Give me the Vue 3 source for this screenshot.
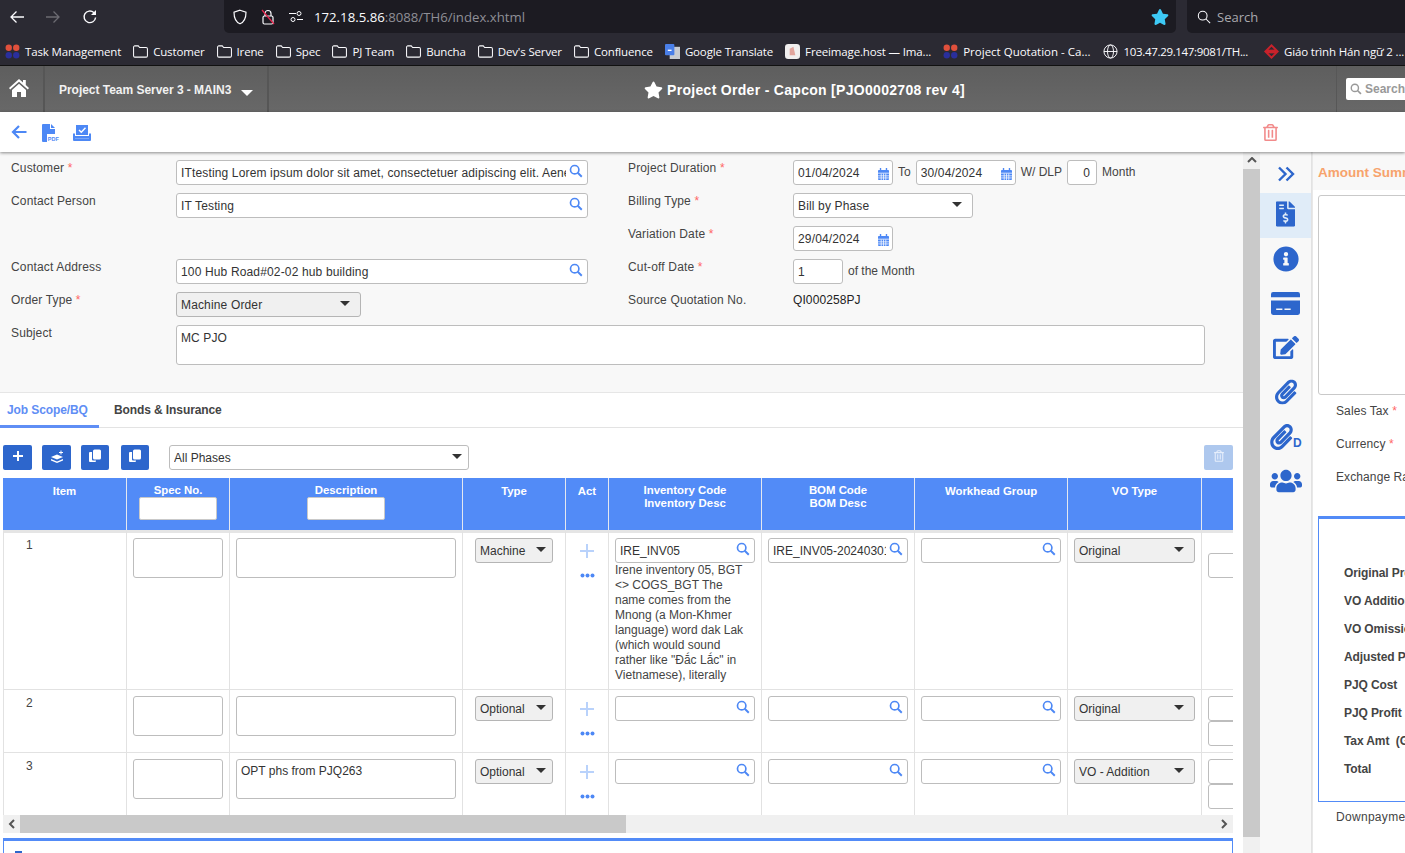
<script setup>
const bookmarks = [
  { icon: 'dots', text: 'Task Management' },
  { icon: 'folder', text: 'Customer' },
  { icon: 'folder', text: 'Irene' },
  { icon: 'folder', text: 'Spec' },
  { icon: 'folder', text: 'PJ Team' },
  { icon: 'folder', text: 'Buncha' },
  { icon: 'folder', text: "Dev's Server" },
  { icon: 'folder', text: 'Confluence' },
  { icon: 'gt', text: 'Google Translate' },
  { icon: 'free', text: 'Freeimage.host — Ima...' },
  { icon: 'dots', text: 'Project Quotation - Ca...' },
  { icon: 'globe', text: '103.47.29.147:9081/TH...' },
  { icon: 'sofl', text: 'Giáo trình Hán ngữ 2 ...' }
]
const rows = [
  { no: 1, cls: 'r1', desc: '', type: 'Machine', code: 'IRE_INV05', bom: 'IRE_INV05-20240301', vo: 'Original', extra: 1,
    text: 'Irene inventory 05, BGT <> COGS_BGT The name comes from the Mnong (a Mon-Khmer language) word dak Lak (which would sound rather like "Đắc Lắc" in Vietnamese), literally' },
  { no: 2, cls: 'r2', desc: '', type: 'Optional', code: '', bom: '', vo: 'Original', extra: 2, text: '' },
  { no: 3, cls: 'r2', desc: 'OPT phs from PJQ263', type: 'Optional', code: '', bom: '', vo: 'VO - Addition', extra: 2, text: '' }
]
const rail = [
  { id: 'i-invoice', vb: '0 0 384 512', cls: 'ri-doc', active: true },
  { id: 'i-info', vb: '0 0 512 512', cls: 'ri-info' },
  { id: 'i-card', vb: '0 0 28 22', cls: 'ri-card' },
  { id: 'i-edit', vb: '0 0 576 512', cls: 'ri-edit' },
  { id: 'i-clip', vb: '0 0 448 512', cls: 'ri-clip' },
  { id: 'i-clip', vb: '0 0 448 512', cls: 'ri-clipd', d: true },
  { id: 'i-users', vb: '0 0 640 512', cls: 'ri-users' }
]
const totals = ['Original Project', 'VO Addition', 'VO Omission', 'Adjusted Project', 'PJQ Cost', 'PJQ Profit', 'Tax Amt  (GST)', 'Total']
</script>

<template>
  <div class="page">
    <svg class="defs" width="0" height="0" aria-hidden="true">
      <defs>
        <symbol id="i-search" viewBox="0 0 16 16"><circle cx="6.5" cy="6.5" r="4.8" fill="none" stroke="currentColor" stroke-width="1.9"/><path d="M10 10l4.6 4.6" stroke="currentColor" stroke-width="2.2" fill="none"/></symbol>
        <symbol id="i-cal" viewBox="0 0 12 13"><path fill="currentColor" d="M2 0h1.5v2h5V0H10v2h1a1 1 0 0 1 1 1v2H0V3a1 1 0 0 1 1-1h1zM0 6h12v6a1 1 0 0 1-1 1H1a1 1 0 0 1-1-1z"/><path stroke="#fff" stroke-width=".8" d="M3.5 6v7M6 6v7M8.5 6v7M0 8.500h12M0 10.800h12"/></symbol>
        <symbol id="i-home" viewBox="0 0 20 18"><path fill="currentColor" d="M10 0L0 9l1.200 1.400L10 2.700l8.800 7.700L20 9l-3.200-2.900V1h-2.800v2.600zM3 11l7-6.200 7 6.200v7h-5v-5H8v5H3z"/></symbol>
        <symbol id="i-star" viewBox="0 0 576 512"><path fill="currentColor" d="M259.3 17.8L194 150.2 47.9 171.5c-26.2 3.8-36.7 36.1-17.7 54.6l105.7 103-25 145.500c-4.5 26.3 23.2 46 46.4 33.7L288 439.6l130.7 68.7c23.2 12.2 50.9-7.4 46.4-33.7l-25-145.5 105.7-103c19-18.5 8.5-50.8-17.7-54.6L382 150.2 316.7 17.8c-11.7-23.6-45.6-23.9-57.4 0z"/></symbol>
        <symbol id="i-trash" viewBox="0 0 448 512"><path fill="currentColor" d="M268 416h24a12 12 0 0 0 12-12V188a12 12 0 0 0-12-12h-24a12 12 0 0 0-12 12v216a12 12 0 0 0 12 12zM432 80h-82.41l-34-56.7A48 48 0 0 0 274.41 0H173.59a48 48 0 0 0-41.16 23.3L98.41 80H16A16 16 0 0 0 0 96v16a16 16 0 0 0 16 16h16v336a48 48 0 0 0 48 48h288a48 48 0 0 0 48-48V128h16a16 16 0 0 0 16-16V96a16 16 0 0 0-16-16zM171.84 50.91A6 6 0 0 1 177 48h94a6 6 0 0 1 5.15 2.91L293.61 80H154.39zM368 464H80V128h288zm-212-48h24a12 12 0 0 0 12-12V188a12 12 0 0 0-12-12h-24a12 12 0 0 0-12 12v216a12 12 0 0 0 12 12z"/></symbol>
        <symbol id="i-info" viewBox="0 0 512 512"><path fill="currentColor" d="M256 8C119.043 8 8 119.083 8 256c0 136.997 111.043 248 248 248s248-111.003 248-248C504 119.083 392.957 8 256 8zm0 110c23.196 0 42 18.804 42 42s-18.804 42-42 42-42-18.804-42-42 18.804-42 42-42zm56 254c0 6.627-5.373 12-12 12h-88c-6.627 0-12-5.373-12-12v-24c0-6.627 5.373-12 12-12h12v-64h-12c-6.627 0-12-5.373-12-12v-24c0-6.627 5.373-12 12-12h64c6.627 0 12 5.373 12 12v100h12c6.627 0 12 5.373 12 12v24z"/></symbol>
        <symbol id="i-card" viewBox="0 0 28 22"><path fill="currentColor" d="M2 0h24a2 2 0 0 1 2 2v3H0V2a2 2 0 0 1 2-2zM0 8h28v12a2 2 0 0 1-2 2H2a2 2 0 0 1-2-2z"/><path stroke="#f8f8f8" stroke-width="1.500" d="M5 16.500h6M13 16.500h6"/></symbol>
        <symbol id="i-edit" viewBox="0 0 576 512"><path fill="currentColor" d="M402.6 83.2l90.2 90.2c3.8 3.8 3.8 10 0 13.8L274.4 405.6l-92.8 10.3c-12.4 1.4-22.9-9.1-21.5-21.5l10.3-92.8L388.8 83.2c3.8-3.8 10-3.8 13.8 0zm162-22.9l-48.8-48.8c-15.2-15.2-39.9-15.2-55.2 0l-35.4 35.4c-3.8 3.8-3.8 10 0 13.8l90.2 90.2c3.8 3.8 10 3.8 13.8 0l35.4-35.4c15.2-15.3 15.2-40 0-55.2zM384 346.2V448H64V128h229.8c3.2 0 6.2-1.3 8.5-3.5l40-40c7.6-7.6 2.2-20.5-8.5-20.5H48C21.5 64 0 85.5 0 112v352c0 26.5 21.5 48 48 48h352c26.5 0 48-21.5 48-48V306.2c0-10.7-12.9-16-20.5-8.5l-40 40c-2.2 2.3-3.5 5.3-3.5 8.5z"/></symbol>
        <symbol id="i-clip" viewBox="0 0 448 512"><path fill="currentColor" d="M43.246 466.142c-58.43-60.289-57.341-157.511 1.386-217.581L254.392 34c44.316-45.332 116.351-45.336 160.671 0 43.89 44.894 43.943 117.329 0 162.276L232.214 383.128c-29.855 30.537-78.633 30.111-107.982-.998-28.275-29.97-27.368-77.473 1.452-106.953l143.743-146.835c6.182-6.314 16.312-6.422 22.626-.241l22.861 22.379c6.315 6.182 6.422 16.312.241 22.626L171.427 319.927c-4.932 5.045-5.236 13.428-.648 18.292 4.372 4.634 11.245 4.711 15.688.165l182.849-186.851c19.613-20.062 19.613-52.725-.011-72.798-19.189-19.627-49.957-19.637-69.154 0L90.39 293.295c-34.763 35.56-35.299 93.12-1.191 128.313 34.01 35.093 88.985 35.137 123.058.286l172.06-175.999c6.177-6.319 16.307-6.433 22.626-.256l22.877 22.364c6.319 6.177 6.434 16.307.256 22.626l-172.06 175.998c-59.576 60.938-155.943 60.216-214.77-.485z"/></symbol>
        <symbol id="i-users" viewBox="0 0 640 512"><path fill="currentColor" d="M96 224c35.3 0 64-28.7 64-64s-28.7-64-64-64-64 28.7-64 64 28.7 64 64 64zm448 0c35.3 0 64-28.7 64-64s-28.7-64-64-64-64 28.7-64 64 28.7 64 64 64zm32 32h-64c-17.6 0-33.5 7.1-45.1 18.6 40.3 22.1 68.9 62 75.1 109.4h66c17.7 0 32-14.3 32-32v-32c0-35.3-28.7-64-64-64zm-256 0c61.9 0 112-50.1 112-112S381.9 32 320 32 208 82.1 208 144s50.1 112 112 112zm76.8 32h-8.3c-20.8 10-43.9 16-68.5 16s-47.6-6-68.5-16h-8.3C179.6 288 128 339.6 128 403.2V432c0 26.5 21.500 48 48 48h288c26.5 0 48-21.5 48-48v-28.8c0-63.6-51.6-115.2-115.2-115.2zm-223.7-13.4C161.5 263.1 145.6 256 128 256H64c-35.3 0-64 28.7-64 64v32c0 17.7 14.3 32 32 32h65.9c6.3-47.4 34.9-87.3 75.2-109.4z"/></symbol>
        <symbol id="i-invoice" viewBox="0 0 384 512"><path fill="currentColor" d="M377 105L279.1 7c-4.5-4.5-10.6-7-17-7H256v128h128v-6.1c0-6.3-2.5-12.4-7-16.9zm-153 31V0H24C10.7 0 0 10.7 0 24v464c0 13.3 10.7 24 24 24h336c13.3 0 24-10.7 24-24V160H248c-13.2 0-24-10.800-24-24zM64 72c0-4.42 3.58-8 8-8h80c4.42 0 8 3.58 8 8v16c0 4.42-3.58 8-8 8H72c-4.42 0-8-3.58-8-8V72zm0 80v-16c0-4.42 3.58-8 8-8h80c4.42 0 8 3.58 8 8v16c0 4.42-3.58 8-8 8H72c-4.42 0-8-3.58-8-8zm144 263.88V440c0 4.42-3.58 8-8 8h-16c-4.42 0-8-3.58-8-8v-24.29c-11.29-.58-22.27-4.52-31.37-11.35-3.9-2.93-4.1-8.77-.57-12.14l11.75-11.21c2.77-2.64 6.89-2.76 10.13-.73 3.87 2.42 8.26 3.72 12.82 3.72h28.11c6.5 0 11.8-5.92 11.8-13.19 0-5.95-3.61-11.19-8.77-12.73l-45-13.5c-18.59-5.58-31.58-23.42-31.58-43.39 0-24.52 19.05-44.44 42.67-45.07V232c0-4.42 3.58-8 8-8h16c4.42 0 8 3.58 8 8v24.29c11.29.58 22.27 4.51 31.37 11.35 3.9 2.93 4.1 8.77.57 12.14l-11.75 11.21c-2.77 2.64-6.89 2.76-10.13.73-3.87-2.43-8.26-3.72-12.82-3.72h-28.11c-6.5 0-11.8 5.92-11.8 13.19 0 5.95 3.61 11.19 8.77 12.73l45 13.5c18.59 5.58 31.58 23.42 31.58 43.39 0 24.53-19.05 44.44-42.67 45.07z"/></symbol>
        <symbol id="i-folder" viewBox="0 0 16 14"><path fill="none" stroke="currentColor" stroke-width="1.100" d="M2 1h3.600l1.500 1.800H14a1.400 1.400 0 0 1 1.400 1.400V11.500A1.500 1.500 0 0 1 14 13H2A1.500 1.500 0 0 1 .6 11.500V2.400A1.400 1.400 0 0 1 2 1z"/></symbol>
        <symbol id="i-dots" viewBox="0 0 16 16"><circle cx="4" cy="4" r="3.400" fill="#e0503c"/><circle cx="12" cy="4" r="3.400" fill="#e0503c"/><circle cx="4" cy="12" r="3.400" fill="#2a2f9c"/><circle cx="12" cy="12" r="3.400" fill="#2a2f9c"/></symbol>
        <symbol id="i-copy" viewBox="0 0 14 14"><rect x="5" y=".5" width="8" height="10" rx="1.500" fill="#fff"/><path d="M4 3H2a1 1 0 0 0-1 1v8a1 1 0 0 0 1 1h5a1 1 0 0 0 1-1v-.500H5a1 1 0 0 1-1-1z" fill="#fff"/></symbol>
      </defs>
    </svg>

    <header class="browser">
      <div class="nav">
        <svg class="nb b1" viewBox="0 0 16 16"><path d="M15 8H2M7.500 2.500L2 8l5.500 5.500" fill="none" stroke="#fbfbfe" stroke-width="1.300"/></svg>
        <svg class="nb b2" viewBox="0 0 16 16"><path d="M1 8h13M8.500 2.500L14 8l-5.500 5.500" fill="none" stroke="#6c6b72" stroke-width="1.300"/></svg>
        <svg class="nb b3" viewBox="0 0 16 16"><path d="M13.600 8.500A5.800 5.800 0 1 1 11.800 3.600L13.500 5" fill="none" stroke="#fbfbfe" stroke-width="1.400"/><path d="M14 1v5H9z" fill="#fbfbfe"/></svg>
        <div class="urlbar">
          <svg class="ub shield" viewBox="0 0 16 16"><path d="M8 1.200l6 2c0 6-1.800 9.800-6 11.600C3.800 13 2 9.200 2 3.200z" fill="none" stroke="#fbfbfe" stroke-width="1.200"/></svg>
          <svg class="ub lock" viewBox="0 0 16 16"><path d="M5 7V4.500a3 3 0 0 1 6 0V7" fill="none" stroke="#fbfbfe" stroke-width="1.200"/><rect x="3" y="7" width="10" height="8" rx="1.500" fill="none" stroke="#fbfbfe" stroke-width="1.200"/><path d="M2 1l12 14" stroke="#e22850" stroke-width="1.300"/></svg>
          <svg class="ub perm" viewBox="0 0 16 16"><circle cx="11" cy="4.500" r="2" fill="none" stroke="#fbfbfe"/><circle cx="5" cy="10.500" r="2" fill="none" stroke="#fbfbfe"/><path d="M1 4.500h7M9 10.500h6" stroke="#fbfbfe"/></svg>
          <span class="url"><span class="host">172.18.5.86</span>:8088/TH6/index.xhtml</span>
          <svg class="bstar"><use href="#i-star"/></svg>
        </div>
        <div class="bsearch">
          <svg class="bs-ic" viewBox="0 0 16 16"><circle cx="6.500" cy="6.500" r="5" fill="none" stroke="#fbfbfe" stroke-width="1.200"/><path d="M10 10l5 5" stroke="#fbfbfe" stroke-width="1.200"/></svg>
          <span>Search</span>
        </div>
      </div>
      <div class="marks">
        <div v-for="b in bookmarks" :key="b.text" class="mark">
          <svg v-if="b.icon === 'folder'" class="mi"><use href="#i-folder"/></svg>
          <svg v-else-if="b.icon === 'dots'" class="mi"><use href="#i-dots"/></svg>
          <svg v-else-if="b.icon === 'gt'" class="mi" viewBox="0 0 16 16"><rect x="5" y="3" width="11" height="13" fill="#c9ccd1"/><rect width="10" height="12" rx="1" fill="#4a7fe8"/><path d="M3 6h4v1.500H3z" fill="#fff"/></svg>
          <svg v-else-if="b.icon === 'free'" class="mi" viewBox="0 0 16 16"><rect width="16" height="16" rx="3.500" fill="#f1efef"/><path d="M5 12V5l4-2 2 9z" fill="#e2a59d"/></svg>
          <svg v-else-if="b.icon === 'globe'" class="mi" viewBox="0 0 16 16"><g fill="none" stroke="#fbfbfe"><circle cx="8" cy="8" r="7"/><ellipse cx="8" cy="8" rx="3.200" ry="7"/><path d="M1 8h14"/></g></svg>
          <svg v-else class="mi" viewBox="0 0 16 16"><path d="M8 0l8 8-8 8-8-8z" fill="#c9222b"/><path d="M8 3l5 5-5 5-5-5z" fill="#2b2a33"/><rect x="3" y="6" width="10" height="4" fill="#c9222b"/></svg>
          <span>{{ b.text }}</span>
        </div>
      </div>
    </header>

    <div class="appbar">
      <div class="home"><svg class="home-ic"><use href="#i-home"/></svg></div>
      <div class="project"><span>Project Team Server 3 - MAIN3</span><i class="drop"></i></div>
      <div class="apptitle"><svg class="title-star"><use href="#i-star"/></svg><span>Project Order - Capcon [PJO0002708 rev 4]</span></div>
      <div class="appsearch">
        <div class="as-box"><svg class="as-ic"><use href="#i-search"/></svg><span>Search</span></div>
      </div>
    </div>

    <div class="toolbar">
      <svg class="t-back" viewBox="0 0 16 14"><path d="M15.500 7H2.500M8 1L2 7l6 6" fill="none" stroke="#4d88f5" stroke-width="2.200"/></svg>
      <svg class="t-pdf" viewBox="0 0 18 18">
        <path d="M1 0h7v5h5v5H5v8H1a1 1 0 0 1-1-1V1a1 1 0 0 1 1-1zM9 0l4 4H9z" fill="#4d88f5"/>
        <text x="5.800" y="17" class="pdf-t">PDF</text>
      </svg>
      <svg class="t-save" viewBox="0 0 18 16"><path d="M3 0h12v10H3z" fill="#4d88f5"/><path d="M6 5l2.300 2.300L12.500 2.800" fill="none" stroke="#fff" stroke-width="1.400"/><path d="M0 8.500h2v5h14v-5h2V15a1 1 0 0 1-1 1H1a1 1 0 0 1-1-1z" fill="#4d88f5"/><path d="M2 11h14v2.500H2z" fill="#4d88f5"/></svg>
      <svg class="t-trash"><use href="#i-trash"/></svg>
    </div>

    <div class="main">
      <section class="left">
        <div class="form">
          <label class="lbl">Customer <em>*</em></label>
          <div class="fld"><span>ITtesting Lorem ipsum dolor sit amet, consectetuer adipiscing elit. Aenean commodo</span><svg class="sic"><use href="#i-search"/></svg></div>
          <i></i>
          <label class="lbl">Project Duration <em>*</em></label>
          <div class="inline">
            <div class="fld w100"><span>01/04/2024</span><svg class="cal"><use href="#i-cal"/></svg></div>
            <span class="txt to">To</span>
            <div class="fld w100"><span>30/04/2024</span><svg class="cal"><use href="#i-cal"/></svg></div>
            <span class="txt">W/ DLP</span>
            <div class="fld w30 right"><span>0</span></div>
            <span class="txt">Month</span>
          </div>

          <label class="lbl">Contact Person</label>
          <div class="fld"><span>IT Testing</span><svg class="sic"><use href="#i-search"/></svg></div>
          <i></i>
          <label class="lbl">Billing Type <em>*</em></label>
          <div class="inline"><div class="fld sel w180"><span>Bill by Phase</span><i class="caret"></i></div></div>

          <i></i><i></i><i></i>
          <label class="lbl">Variation Date <em>*</em></label>
          <div class="inline"><div class="fld w100"><span>29/04/2024</span><svg class="cal"><use href="#i-cal"/></svg></div></div>

          <label class="lbl">Contact Address</label>
          <div class="fld"><span>100 Hub Road#02-02 hub building</span><svg class="sic"><use href="#i-search"/></svg></div>
          <i></i>
          <label class="lbl">Cut-off Date <em>*</em></label>
          <div class="inline"><div class="fld w50"><span>1</span></div><span class="txt">of the Month</span></div>

          <label class="lbl">Order Type <em>*</em></label>
          <div><div class="fld sel gray w185"><span>Machine Order</span><i class="caret"></i></div></div>
          <i></i>
          <label class="lbl">Source Quotation No.</label>
          <div class="plain">QI000258PJ</div>

          <label class="lbl">Subject</label>
          <div class="area wide">MC PJO</div>
        </div>

        <div class="tabs">
          <div class="tab on">Job Scope/BQ</div>
          <div class="tab">Bonds &amp; Insurance</div>
        </div>

        <div class="actions">
          <button class="btn b-add"><svg viewBox="0 0 12 12"><path d="M6 1v10M1 6h10" stroke="#fff" stroke-width="2"/></svg></button>
          <button class="btn b-layer"><svg viewBox="0 0 14 14"><path d="M7 4.500l6 2.500-6 2.500L1 7z" fill="#fff"/><path d="M1 9l6 2.500L13 9v1.500L7 13l-6-2.500z" fill="#fff"/><path d="M11 .5v4M9 2.500h4" stroke="#fff"/></svg></button>
          <button class="btn b-c1"><svg><use href="#i-copy"/></svg></button>
          <button class="btn b-c2"><svg><use href="#i-copy"/></svg></button>
          <div class="fld sel phases"><span>All Phases</span><i class="caret"></i></div>
          <button class="btn b-del"><svg><use href="#i-trash"/></svg></button>
        </div>

        <div class="tablewrap">
          <table>
            <colgroup>
              <col class="c-item"><col class="c-spec"><col class="c-desc"><col class="c-type"><col class="c-act"><col class="c-inv"><col class="c-inv"><col class="c-inv"><col class="c-vo"><col class="c-next">
            </colgroup>
            <thead>
              <tr>
                <th>Item</th>
                <th class="tight">Spec No.<div class="hinput"></div></th>
                <th class="tight">Description<div class="hinput"></div></th>
                <th>Type</th>
                <th>Act</th>
                <th class="tight2">Inventory Code<br>Inventory Desc</th>
                <th class="tight2">BOM Code<br>BOM Desc</th>
                <th>Workhead Group</th>
                <th>VO Type</th>
                <th></th>
              </tr>
            </thead>
            <tbody>
              <tr v-for="r in rows" :key="r.no" :class="r.cls">
                <td class="item">{{ r.no }}</td>
                <td><div class="area cell">&nbsp;</div></td>
                <td><div class="area cell">{{ r.desc }}</div></td>
                <td class="ctr"><div class="fld sel gray typesel"><span>{{ r.type }}</span><i class="caret"></i></div></td>
                <td class="act">
                  <svg class="plus" viewBox="0 0 14 14"><path d="M7 0v14M0 7h14" stroke="#b9d2fb" stroke-width="2"/></svg>
                  <svg class="more" viewBox="0 0 15 5"><circle cx="2.500" cy="2.500" r="2" fill="#4d88f5"/><circle cx="7.500" cy="2.500" r="2" fill="#4d88f5"/><circle cx="12.500" cy="2.500" r="2" fill="#4d88f5"/></svg>
                </td>
                <td>
                  <div class="fld"><span>{{ r.code }}</span><svg class="sic"><use href="#i-search"/></svg></div>
                  <p v-if="r.text" class="invtext">{{ r.text }}</p>
                </td>
                <td><div class="fld"><span>{{ r.bom }}</span><svg class="sic"><use href="#i-search"/></svg></div></td>
                <td><div class="fld"><span></span><svg class="sic"><use href="#i-search"/></svg></div></td>
                <td><div class="fld sel gray"><span>{{ r.vo }}</span><i class="caret"></i></div></td>
                <td class="next" :class="{ single: r.extra === 1 }">
                  <div v-for="n in r.extra" :key="n" class="fld nextf"></div>
                </td>
              </tr>
            </tbody>
          </table>
        </div>

        <div class="hscroll">
          <svg class="arr" viewBox="0 0 17 18"><path d="M11 5L7 9l4 4" fill="none" stroke="#555" stroke-width="2"/></svg>
          <div class="hthumb"></div>
          <svg class="arr end" viewBox="0 0 17 18"><path d="M6 5l4 4-4 4" fill="none" stroke="#555" stroke-width="2"/></svg>
        </div>

        <div class="bluebox"><i class="tick"></i></div>
      </section>

      <aside class="vscroll">
        <div class="vcap"><svg viewBox="0 0 10 6"><path d="M1 5l4-4 4 4" fill="none" stroke="#555" stroke-width="2"/></svg></div>
        <div class="vthumb"></div>
      </aside>

      <nav class="rail">
        <svg class="chev" viewBox="0 0 18 16"><path d="M2 1.500L8.500 8 2 14.500M9.500 1.500L16 8l-6.500 6.500" fill="none" stroke="#2d66cc" stroke-width="2.400"/></svg>
        <div v-for="(it, idx) in rail" :key="idx" class="rail-item" :class="[it.cls, { active: it.active }]">
          <svg :viewBox="it.vb"><use :href="'#' + it.id"/></svg>
          <b v-if="it.d">D</b>
        </div>
      </nav>

      <aside class="summary">
        <div class="sum-head">Amount Summary</div>
        <div class="sum-inner">
          <div class="sum-area"></div>
          <div class="sum-row">Sales Tax <em>*</em></div>
          <div class="sum-row">Currency <em>*</em></div>
          <div class="sum-row">Exchange Rate</div>
          <div class="sum-box">
            <div v-for="t in totals" :key="t" class="sum-total">{{ t }}</div>
          </div>
          <div class="sum-row down">Downpayment</div>
        </div>
      </aside>
    </div>
  </div>
</template>

<style>
html, body { margin: 0; padding: 0; overflow: hidden; background: #fff; }
</style>

<style scoped>
* { box-sizing: border-box; }
.page { width: 1405px; height: 853px; overflow: hidden; font: 12px/14px "Liberation Sans", Arial, sans-serif; color: #444; display: flex; flex-direction: column; }
.defs { position: absolute; }
em { font-style: normal; color: #f66; }

.browser { background: #2b2a33; height: 66px; flex: none; border-bottom: 1px solid #111; color: #fbfbfe; font-family: "Open Sans", sans-serif; }
.nav { height: 33px; display: flex; align-items: center; }
.nb { width: 16px; height: 16px; flex: none; }
.b1 { margin-left: 9px; }
.b2 { margin-left: 20px; }
.b3 { margin-left: 21px; }
.urlbar { margin-left: 126px; width: 952px; height: 33px; background: #1c1b22; border-radius: 0 0 5px 5px; display: flex; align-items: center; }
.ub { width: 16px; height: 16px; flex: none; }
.shield { margin-left: 8px; }
.lock { margin-left: 12px; }
.perm { margin-left: 12px; }
.url { margin-left: 10px; margin-top: 1px; font-size: 13.200px; color: #8f8f96; flex: 1; white-space: nowrap; }
.host { color: #fbfbfe; }
.bstar { width: 18px; height: 18px; color: #3dc9f5; margin-right: 7px; flex: none; }
.bsearch { margin-left: 11px; flex: 1; height: 33px; background: #1c1b22; border-radius: 0 0 0 5px; display: flex; align-items: center; padding: 1px 0 0 10px; gap: 6px; font-size: 13px; color: #a9a9ae; }
.bs-ic { width: 14px; height: 14px; }
.marks { height: 32px; display: flex; align-items: center; padding: 5px 0 0 5px; gap: 12px; white-space: nowrap; }
.mark { display: flex; align-items: center; gap: 5px; font-size: 11.500px; letter-spacing: -.15px; flex: none; }
.mark:nth-child(11) { letter-spacing: 0; }
.mark:nth-child(12) { letter-spacing: -.32px; margin-left: 1px; }
.mark:nth-child(13) { margin-left: 4px; }
.mi { width: 15px; height: 15px; flex: none; }

.appbar { height: 46px; flex: none; display: flex; background: linear-gradient(#5e5e5e, #686868); color: #fff; }
.home { width: 45px; border-right: 2px solid #565656; display: flex; justify-content: center; padding-top: 13px; }
.home-ic { width: 20px; height: 18px; color: #fff; margin-right: 5px; }
.project { width: 224px; border-right: 2px solid #565656; display: flex; align-items: center; padding: 2px 0 0 14px; font-weight: bold; font-size: 12px; letter-spacing: -.03px; color: #f1f1f1; }
.drop { width: 0; height: 0; border: 6px solid transparent; border-top: 6px solid #fff; border-bottom: 0; margin: 6px 0 0 10px; }
.apptitle { flex: 1; display: flex; align-items: center; justify-content: center; gap: 4px; font-weight: bold; font-size: 14px; letter-spacing: .3px; padding: 2px 0 0 4px; }
.title-star { width: 19px; height: 18px; color: #fff; }
.appsearch { width: 69px; border-left: 1px solid #575757; padding: 12px 0 0 9px; }
.as-box { width: 80px; height: 22px; background: #fff; border-radius: 2px; display: flex; align-items: center; gap: 3px; padding-left: 4px; color: #999; font-weight: bold; font-size: 12px; }
.as-ic { width: 12px; height: 12px; color: #999; flex: none; }

.toolbar { height: 40px; flex: none; background: #fff; display: flex; align-items: center; padding: 0 127px 0 11px; position: relative; box-shadow: 0 1px 3px rgba(0,0,0,.45); z-index: 2; }
.t-back { width: 16px; height: 14px; }
.t-pdf { width: 18px; height: 18px; margin: 2px 0 0 15px; }
.pdf-t { font: bold 5.500px "Liberation Sans", sans-serif; fill: #4d88f5; }
.t-save { width: 18px; height: 16px; margin: 2px 0 0 13px; }
.t-trash { width: 15px; height: 17px; color: #f28b8b; margin-left: auto; }

.main { flex: 1; display: flex; min-height: 0; }
.left { width: 1243px; flex: none; overflow: hidden; background: #fff; }

.form { height: 240px; background: #f8f8f8; padding: 8px 38px 0 11px; display: grid; grid-template-columns: 165px 412px 40px 165px 1fr; grid-auto-rows: 33px; letter-spacing: .1px; }
.lbl { padding-top: 1px; color: #444; letter-spacing: .15px; }
.fld { height: 25px; border: 1px solid #bdbdbd; border-radius: 3px; background: #fff; display: flex; align-items: center; padding: 0 4px; color: #333; }
.fld > span { flex: 1; min-width: 0; overflow: hidden; white-space: nowrap; }
.form .fld { letter-spacing: .15px; }
.sic { width: 14px; height: 14px; color: #4d88f5; flex: none; margin: -3px 0 0 3px; }
.cal { width: 11px; height: 12px; color: #4d88f5; flex: none; margin: 2px -1px 0 0; }
.inline { display: flex; align-items: flex-start; gap: 5px; }
.txt { line-height: 25px; color: #444; letter-spacing: 0; }
.w100 { width: 100px; }
.w30 { width: 30px; }
.w50 { width: 50px; }
.w180 { width: 180px; }
.w185 { width: 185px; }
.right { text-align: right; }
.right span { padding-right: 2px; }
.sel { padding-right: 10px; }
.gray { background: #f0f0f0; border-color: #b5b5b5; }
.caret { width: 0; height: 0; border: 5px solid transparent; border-top: 5px solid #333; border-bottom: 0; flex: none; margin-top: -2px; }
.plain { color: #222; padding-top: 1px; }
.area { border: 1px solid #bdbdbd; border-radius: 3px; background: #fff; padding: 5px 4px; color: #333; }
.wide { grid-column: 2 / -1; height: 40px; }

.tabs { height: 36px; border-top: 1px solid #e6e6e6; border-bottom: 1px solid #e3e3e3; display: flex; background: #fff; letter-spacing: -.1px; }
.tab { font-weight: bold; padding: 10px 7px 0; height: 35px; color: #444; }
.tab:last-child { margin-left: 8px; }
.tab.on { color: #5f8ef5; border-bottom: 3px solid #5f8ef5; width: 99px; }

.actions { height: 50px; padding: 17px 10px 0 3px; display: flex; background: #fff; }
.btn { height: 25px; border: 0; border-radius: 2px; background: #2d66cc; padding: 0; display: flex; align-items: center; justify-content: center; flex: none; color: #fff; }
.b-add { width: 29px; }
.b-add svg { width: 12px; height: 12px; margin-top: -3px; }
.b-layer { width: 29px; margin-left: 10px; }
.b-layer svg { width: 14px; height: 14px; margin-top: -2px; }
.b-c1, .b-c2 { width: 28px; }
.b-c1 { margin-left: 10px; }
.b-c2 { margin-left: 12px; }
.b-c1 svg, .b-c2 svg { width: 14px; height: 14px; margin-top: -3px; }
.phases { width: 300px; margin-left: 20px; padding-right: 6px; }
.b-del { width: 29px; margin-left: auto; background: #aec8ee; color: #e6eefb; }
.b-del svg { width: 10px; height: 12px; margin-top: -3px; }

.tablewrap { margin-left: 3px; width: 1230px; overflow: hidden; height: 337px; background: #fff; }
table { table-layout: fixed; width: 1299px; border-collapse: separate; border-spacing: 0; }
.c-item { width: 124px; }
.c-spec { width: 103px; }
.c-desc { width: 233px; }
.c-type { width: 103px; }
.c-act { width: 43px; }
.c-inv { width: 153px; }
.c-vo { width: 134px; }
.c-next { width: 200px; }
th { height: 52px; background: #528bf7; color: #fff; font-size: 11.400px; font-weight: bold; vertical-align: top; padding: 7px 2px 0; border-right: 1px solid #e4e8f0; line-height: 13px; text-align: center; }
th.tight { padding-top: 6px; }
th.tight2 { padding-top: 6px; }
.hinput { width: 78px; height: 23px; margin: 0 auto; background: #fff; border: 1px solid #c9c9c9; border-radius: 2px; }
tbody tr:first-child td { height: 160px; padding-top: 5px; border-top: 3px solid #e5e5e5; }
.r2 td { height: 63px; }
td { vertical-align: top; padding: 6px 6px 0 6px; border-right: 1px solid #e2e2e2; border-bottom: 1px solid #e2e2e2; }
td.item { padding-left: 22px; padding-top: 8px; color: #444; }
.r2 td.item { padding-top: 6px; }
.r1 td:first-child { border-left: 1px solid #e2e2e2; padding-top: 5px; }
.r2 td:first-child { border-left: 1px solid #e2e2e2; }
.area.cell { height: 40px; padding: 4px 4px; width: 100%; }
.ctr { padding-left: 12px; padding-right: 11px; }
.typesel { width: 78px; padding-right: 6px; }
.act { text-align: center; padding: 6px 0 0; }
.plus { display: block; width: 14px; height: 14px; margin: 6px auto 14.500px; }
.more { display: block; width: 15px; height: 5px; margin: 0 auto; }
.invtext { margin: 0; line-height: 15px; color: #444; width: 140px; }
.next { padding-right: 0; }
.next.single { padding-top: 20px; }
.nextf { width: 60px; }
.nextf + .nextf { margin-top: 0; height: 25px; }

.hscroll { height: 18px; background: #f0f0f0; margin-left: 3px; width: 1230px; display: flex; align-items: center; }
.arr { width: 17px; height: 18px; flex: none; }
.hthumb { width: 606px; height: 18px; background: #c9c9c9; flex: none; }
.arr.end { margin-left: auto; }
.bluebox { margin: 5px 0 0 3px; width: 1230px; height: 30px; border: 1px solid #528bf7; border-top: 3px solid #528bf7; padding: 10px 0 0 11px; background: #fff; }
.tick { display: block; width: 7px; height: 3px; background: #2d66cc; }

.vscroll { width: 17px; flex: none; background: #f0f0f0; display: flex; flex-direction: column; }
.vcap { height: 17px; display: flex; justify-content: center; padding-top: 5px; }
.vcap svg { width: 10px; height: 6px; }
.vthumb { height: 668px; background: #c9c9c9; }

.rail { width: 52px; flex: none; background: #f8f8f8; border-right: 1px solid #e2e2e2; padding-top: 14px; }
.chev { display: block; width: 18px; height: 16px; margin: 0 0 11px 17px; }
.rail-item { height: 44.500px; display: flex; align-items: center; justify-content: center; color: #2d66cc; position: relative; }
.rail-item.active { background: #e0ecf8; }
.rail-item svg { color: #2d66cc; fill: currentColor; margin-top: -2px; }
.ri-doc svg { width: 19px; height: 26px; }
.ri-info svg { width: 26px; height: 26px; }
.ri-card svg { width: 29px; height: 23px; }
.ri-edit svg { width: 26px; height: 25px; }
.ri-clip svg { width: 22px; height: 26px; }
.ri-clipd svg { width: 23px; height: 26px; margin-right: 8px; }
.ri-clipd b { position: absolute; left: 33px; top: 20px; font-size: 12px; font-weight: bold; color: #2d66cc; }
.ri-users svg { width: 32px; height: 26px; }

.summary { flex: 1; min-width: 0; overflow: hidden; background: #fff; border-left: 1px solid #e8e8e8; }
.sum-head { height: 38px; background: #f8f8f8; color: #f7a36c; font-weight: bold; font-size: 13.500px; padding: 14px 0 0 5px; white-space: nowrap; }
.sum-inner { width: 400px; padding: 5px 0 0 5px; }
.sum-area { height: 200px; border: 1px solid #c9c9c9; border-radius: 3px; background: #fff; }
.sum-row { height: 33px; padding: 9px 0 0 18px; color: #444; white-space: nowrap; letter-spacing: .1px; }
.sum-box { margin-top: 22px; height: 286px; border: 1px solid #528bf7; border-top: 3px solid #528bf7; padding: 47px 0 0 25px; }
.sum-total { height: 28px; font-weight: bold; color: #444; white-space: pre; letter-spacing: -.1px; }
.sum-row.down { padding-top: 8px; letter-spacing: .3px; }
</style>
